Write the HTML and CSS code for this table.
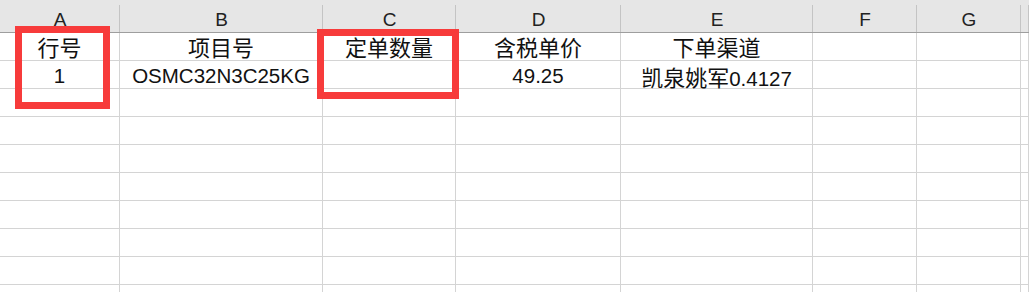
FILE: index.html
```html
<!DOCTYPE html>
<html lang="zh-CN">
<head>
    <meta charset="UTF-8">
    <title>订单表</title>
    <link rel="stylesheet" href="styles.css">
</head>
<body>
    <div class="sheet">
        <div class="grid">
            <div class="col-head">A</div>
            <div class="col-head">B</div>
            <div class="col-head">C</div>
            <div class="col-head">D</div>
            <div class="col-head">E</div>
            <div class="col-head">F</div>
            <div class="col-head">G</div>
            <div class="col-head"></div>

            <div class="cell zh">行号</div>
            <div class="cell zh">项目号</div>
            <div class="cell zh">定单数量</div>
            <div class="cell zh">含税单价</div>
            <div class="cell zh">下单渠道</div>
            <div class="cell"></div>
            <div class="cell"></div>
            <div class="cell"></div>

            <div class="cell">1</div>
            <div class="cell">OSMC32N3C25KG</div>
            <div class="cell"></div>
            <div class="cell">49.25</div>
            <div class="cell"><span class="zh">凯泉姚军</span>0.4127</div>
            <div class="cell"></div>
            <div class="cell"></div>
            <div class="cell"></div>

            <div class="cell"></div><div class="cell"></div><div class="cell"></div><div class="cell"></div><div class="cell"></div><div class="cell"></div><div class="cell"></div><div class="cell"></div>
            <div class="cell"></div><div class="cell"></div><div class="cell"></div><div class="cell"></div><div class="cell"></div><div class="cell"></div><div class="cell"></div><div class="cell"></div>
            <div class="cell"></div><div class="cell"></div><div class="cell"></div><div class="cell"></div><div class="cell"></div><div class="cell"></div><div class="cell"></div><div class="cell"></div>
            <div class="cell"></div><div class="cell"></div><div class="cell"></div><div class="cell"></div><div class="cell"></div><div class="cell"></div><div class="cell"></div><div class="cell"></div>
            <div class="cell"></div><div class="cell"></div><div class="cell"></div><div class="cell"></div><div class="cell"></div><div class="cell"></div><div class="cell"></div><div class="cell"></div>
            <div class="cell"></div><div class="cell"></div><div class="cell"></div><div class="cell"></div><div class="cell"></div><div class="cell"></div><div class="cell"></div><div class="cell"></div>
            <div class="cell"></div><div class="cell"></div><div class="cell"></div><div class="cell"></div><div class="cell"></div><div class="cell"></div><div class="cell"></div><div class="cell"></div>
            <div class="cell"></div><div class="cell"></div><div class="cell"></div><div class="cell"></div><div class="cell"></div><div class="cell"></div><div class="cell"></div><div class="cell"></div>
        </div>

        <!-- 标注框 -->
        <div class="mark mark-a"></div>
        <div class="mark mark-c"></div>
    </div>
</body>
</html>
```

FILE: styles.css
```css
body{
    margin: 0;
    background-color: #ffffff;
    overflow: hidden;
}

.sheet{
    position: relative;
    height: 292px;
    overflow: hidden;
}

.grid{
    display: grid;
    grid-template-columns: 120px 203px 133px 165px 192px 104px 104px 1fr;
    grid-template-rows: 33px;
    grid-auto-rows: 28px;
    font-family: "Liberation Sans", "Noto Sans CJK SC", sans-serif;
    color: #111111;
}

.col-head{
    box-sizing: border-box;
    height: 33px;
    padding-top: 8px;
    line-height: 24px;
    font-size: 19px;
    color: #222222;
    text-align: center;
    background-color: #e6e6e6;
    background-image: linear-gradient(to right, transparent calc(100% - 1px), #c4c4c4 0);
    background-size: 100% 27px;
    background-position: bottom;
    background-repeat: no-repeat;
    border-bottom: 1px solid #9e9e9e;
}

.cell{
    box-sizing: border-box;
    padding-top: 3px;
    line-height: 24px;
    font-size: 20.5px;
    text-align: center;
    white-space: nowrap;
    border-right: 1px solid #d4d4d4;
    border-bottom: 1px solid #d4d4d4;
}

.zh{
    font-family: "Noto Sans CJK SC", sans-serif;
    font-size: 22px;
}

.cell.zh{
    padding-top: 0;
    line-height: 26px;
}

.mark{
    position: absolute;
    box-sizing: border-box;
    border: 7px solid #f73b3b;
}

.mark-a{
    left: 15px;
    top: 26px;
    width: 95px;
    height: 83px;
}

.mark-c{
    left: 317px;
    top: 29px;
    width: 142px;
    height: 70px;
}
```
